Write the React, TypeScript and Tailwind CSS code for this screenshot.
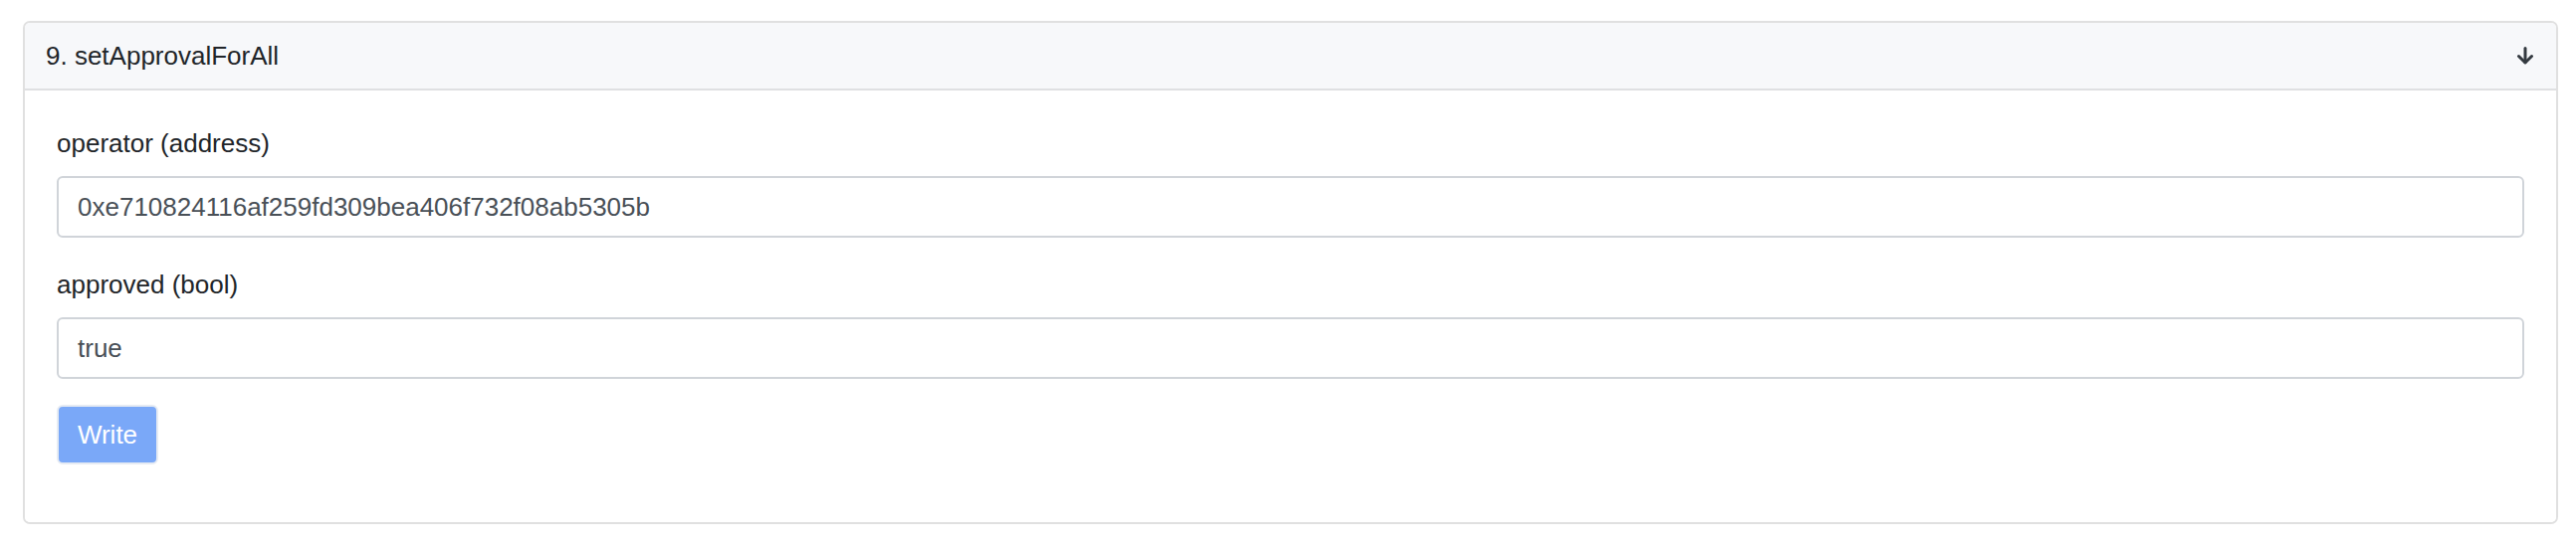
import React from 'react';

const font = { fontFamily: '"Liberation Sans", Arial, sans-serif' };

function ArrowDown() {
  return (
    <svg width="20" height="20" viewBox="0 0 20 20" fill="none" stroke="#343a40" strokeWidth="3" strokeLinecap="round" strokeLinejoin="round">
      <path d="M10 2.5v14" />
      <path d="M3.5 10.5l6.5 6.5 6.5-6.5" />
    </svg>
  );
}

function Field({ label, value }: { label: string; value: string }) {
  return (
    <div>
      <label className="block text-[26px] leading-[34px] text-[#212529] mb-[16px]">{label}</label>
      <div className="h-[62px] border-2 border-[#d0d4d9] rounded-[6px] bg-white flex items-center pl-[19px] text-[26px] text-[#495057]">
        {value}
      </div>
    </div>
  );
}

export default function App() {
  return (
    <div className="min-h-screen bg-white pt-[21px] pl-[23px]" style={font}>
      <div className="w-[2547px] border-2 border-[#e0e0e0] rounded-[7px] overflow-hidden">
        {/* Header */}
        <div className="h-[68px] bg-[#f7f8fa] border-b-2 border-[#dfe0e2] flex items-center justify-between pl-[21px] pr-[21px]">
          <span className="text-[26px] text-[#212529]">9. setApprovalForAll</span>
          <ArrowDown />
        </div>

        {/* Body */}
        <div className="px-[32px] pt-[36px] pb-[58px] bg-white">
          <Field label="operator (address)" value="0xe710824116af259fd309bea406f732f08ab5305b" />
          <div className="mt-[30px]">
            <Field label="approved (bool)" value="true" />
          </div>
          <button
            disabled
            className="mt-[26px] h-[60px] w-[102px] rounded-[6px] border-2 border-[#e6ebf3] bg-[#7aa8f8] text-white text-[26px] flex items-center justify-center"
          >
            Write
          </button>
        </div>
      </div>
    </div>
  );
}
